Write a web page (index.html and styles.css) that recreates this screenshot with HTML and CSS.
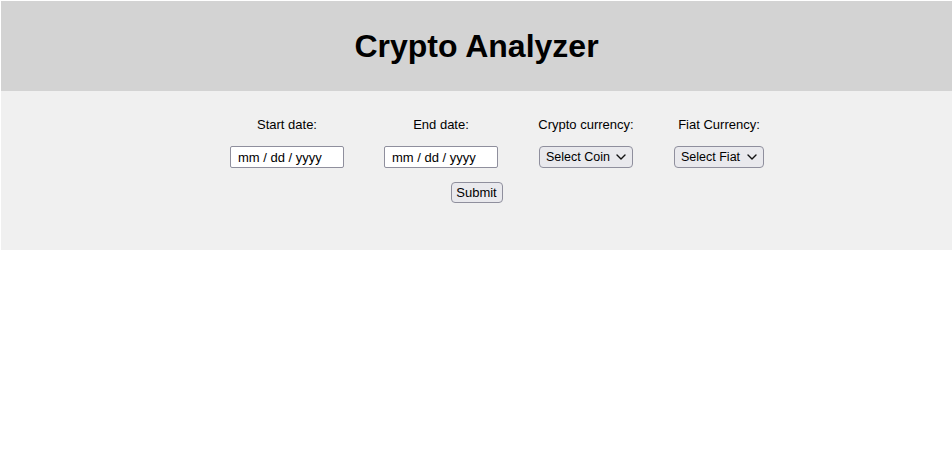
FILE: index.html
```html
<!DOCTYPE html>
<html lang="en">
<head>
<meta charset="utf-8">
<title>Crypto Analyzer</title>
<link rel="stylesheet" href="styles.css">
</head>
<body>
<div class="page">
  <header class="header">
    <h1 class="title">Crypto Analyzer</h1>
  </header>
  <form class="panel">
    <div class="row">
      <div class="field field-start">
        <label class="label">Start date:</label>
        <input class="date" type="text" value="mm / dd / yyyy" readonly>
      </div>
      <div class="field field-end">
        <label class="label">End date:</label>
        <input class="date" type="text" value="mm / dd / yyyy" readonly>
      </div>
      <div class="field field-coin">
        <label class="label">Crypto currency:</label>
        <div class="select"><span>Select Coin</span><svg class="chev" width="10" height="6" viewBox="0 0 10 6"><path d="M1 1 L5 5 L9 1" fill="none" stroke="#111" stroke-width="1.4" stroke-linecap="round" stroke-linejoin="round"/></svg></div>
      </div>
      <div class="field field-fiat">
        <label class="label">Fiat Currency:</label>
        <div class="select"><span>Select Fiat</span><svg class="chev" width="10" height="6" viewBox="0 0 10 6"><path d="M1 1 L5 5 L9 1" fill="none" stroke="#111" stroke-width="1.4" stroke-linecap="round" stroke-linejoin="round"/></svg></div>
      </div>
    </div>
    <div class="actions">
      <button class="submit" type="button">Submit</button>
    </div>
  </form>
</div>
</body>
</html>
```
FILE: styles.css
```css
html, body {
  margin: 0;
  padding: 0;
  background: #fff;
}
body {
  padding: 1px 0 0 1px;
  font-family: "Liberation Sans", Arial, sans-serif;
}
.page {
  width: 951px;
}
.header {
  height: 90px;
  background: #d3d3d3;
  display: flex;
  align-items: center;
  justify-content: center;
}
.title {
  margin: 0;
  font-size: 32px;
  font-weight: bold;
  color: #000;
  line-height: 37px;
}
.panel {
  margin: 0;
  height: 159px;
  box-sizing: border-box;
  background: #f0f0f0;
  padding-top: 26px;
}
.row {
  display: flex;
  justify-content: center;
  gap: 41px;
  padding-left: 41px;
}
.field {
  display: flex;
  flex-direction: column;
  align-items: center;
  gap: 14px;
  flex: none;
}
.field-start { width: 114px; margin-right: -1px; }
.field-end { width: 114px; }
.field-coin { width: 94px; }
.field-fiat { width: 90px; }
.label {
  font-size: 13px;
  line-height: 15px;
  color: #000;
  white-space: nowrap;
}
.date {
  box-sizing: border-box;
  width: 114px;
  height: 22px;
  margin: 0;
  padding: 0 0 0 7px;
  border: 1px solid #8f8f9d;
  border-radius: 2px;
  background: #fff;
  font-family: "Liberation Sans", Arial, sans-serif;
  font-size: 13px;
  color: #000;
  outline: none;
}
.select {
  box-sizing: border-box;
  width: 100%;
  height: 22px;
  display: flex;
  align-items: center;
  justify-content: space-between;
  padding: 0 6px 0 6px;
  border: 1px solid #8f8f9d;
  border-radius: 4px;
  background: #e9e9ed;
  font-size: 12.5px;
  color: #000;
}
.chev { display: block; }
.actions {
  display: flex;
  justify-content: center;
  margin-top: 14px;
}
.submit {
  box-sizing: border-box;
  width: 52px;
  height: 21px;
  margin: 0;
  padding: 0;
  border: 1px solid #8f8f9d;
  border-radius: 4px;
  background: #e9e9ed;
  font-family: "Liberation Sans", Arial, sans-serif;
  font-size: 13px;
  color: #000;
}
```
